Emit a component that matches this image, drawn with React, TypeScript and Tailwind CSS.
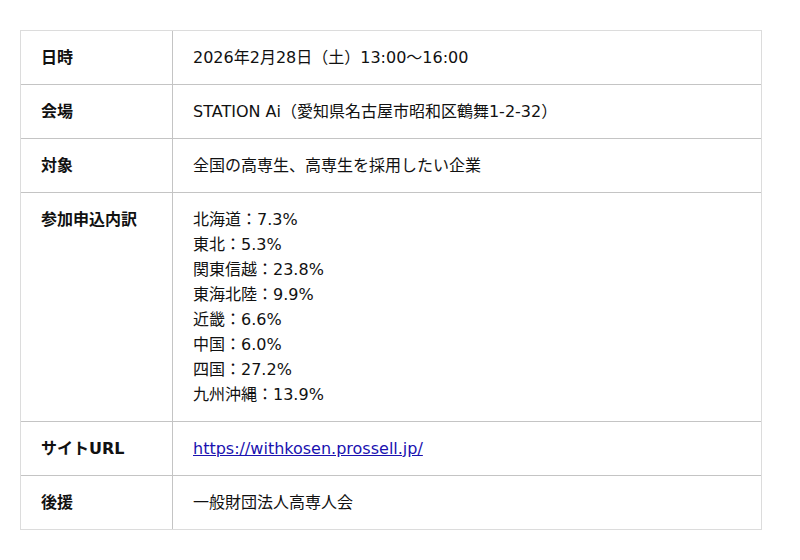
import React from "react";

const rows: { label: string; value: React.ReactNode }[] = [
  { label: "日時", value: "2026年2月28日（土）13:00〜16:00" },
  { label: "会場", value: "STATION Ai（愛知県名古屋市昭和区鶴舞1-2-32）" },
  { label: "対象", value: "全国の高専生、高専生を採用したい企業" },
  {
    label: "参加申込内訳",
    value: (
      <>
        <div>北海道：7.3%</div>
        <div>東北：5.3%</div>
        <div>関東信越：23.8%</div>
        <div>東海北陸：9.9%</div>
        <div>近畿：6.6%</div>
        <div>中国：6.0%</div>
        <div>四国：27.2%</div>
        <div>九州沖縄：13.9%</div>
      </>
    ),
  },
  {
    label: "サイトURL",
    value: (
      <a href="#" className="text-[#1a12b0] underline">
        https://withkosen.prossell.jp/
      </a>
    ),
  },
  { label: "後援", value: "一般財団法人高専人会" },
];

export default function App() {
  return (
    <div
      className="min-h-[560px] bg-white pt-[30px] pl-[20px] text-[16px] leading-[25px] text-[#111]"
      style={{ fontFamily: '"DejaVu Sans", "Noto Sans CJK JP", sans-serif' }}
    >
      <div className="w-[742px] border border-[#dcdcdc]">
        {rows.map((r, i) => (
          <div
            key={i}
            className={`flex ${i > 0 ? "border-t border-[#c4c4c4]" : ""}`}
          >
            <div className="w-[152px] shrink-0 border-r border-[#c4c4c4] px-[20px] py-[14px] font-bold">
              {r.label}
            </div>
            <div className="flex-1 px-[20px] py-[14px]">{r.value}</div>
          </div>
        ))}
      </div>
    </div>
  );
}
